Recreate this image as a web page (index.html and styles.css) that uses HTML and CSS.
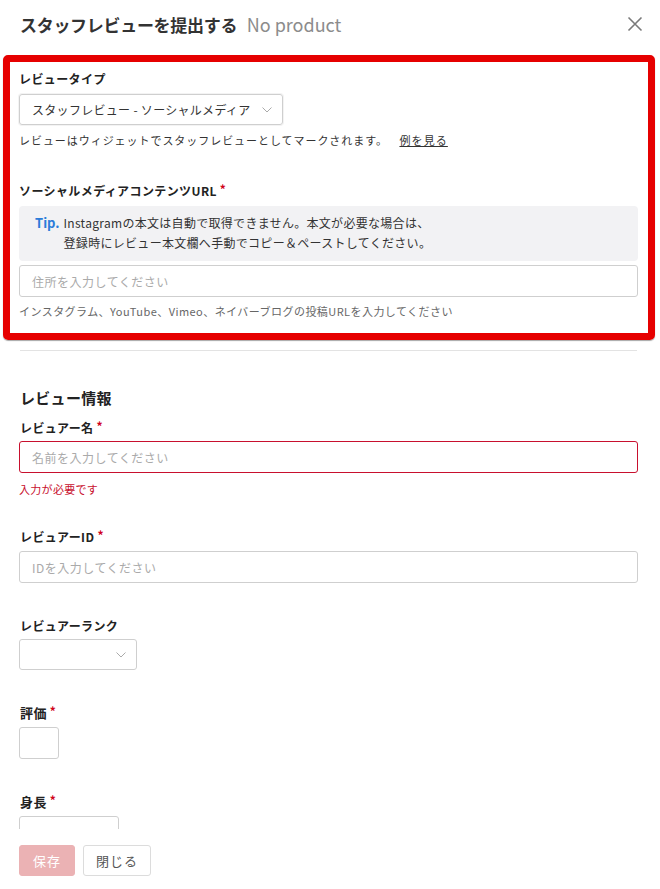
FILE: index.html
```html
<!DOCTYPE html>
<html lang="ja">
<head>
<meta charset="utf-8">
<title>スタッフレビューを提出する</title>
<link rel="stylesheet" href="styles.css">
</head>
<body>
<div class="modal">
  <header class="head">
    <h1 class="title">スタッフレビューを提出する <span class="sub">No product</span></h1>
    <svg class="close" width="16" height="16" viewBox="0 0 16 16"><path d="M1.5 1.5 L14.5 14.5 M14.5 1.5 L1.5 14.5" stroke="#7a7a7a" stroke-width="1.6" fill="none"/></svg>
  </header>

  <section class="highlight">
    <div class="label">レビュータイプ</div>
    <div class="select wide">
      <span>スタッフレビュー - ソーシャルメディア</span>
      <svg class="chev" width="10" height="6" viewBox="0 0 10 6"><path d="M0.5 0.5 L5 5 L9.5 0.5" stroke="#aaa" stroke-width="1" fill="none"/></svg>
    </div>
    <p class="help">レビューはウィジェットでスタッフレビューとしてマークされます。 <a class="link">例を見る</a></p>

    <div class="label label-gap">ソーシャルメディアコンテンツURL<span class="req">*</span></div>
    <div class="tip">
      <span class="tip-key">Tip.</span>
      <div class="tip-text">
        <div>Instagramの本文は自動で取得できません。本文が必要な場合は、</div>
        <div>登録時にレビュー本文欄へ手動でコピー＆ペーストしてください。</div>
      </div>
    </div>
    <div class="input url"><span class="ph">住所を入力してください</span></div>
    <p class="hint">インスタグラム、YouTube、Vimeo、ネイバーブログの投稿URLを入力してください</p>
  </section>

  <hr class="divider">

  <section class="info">
    <h2 class="sect">レビュー情報</h2>
    <div class="label first">レビュアー名<span class="req">*</span></div>
    <div class="input error"><span class="ph">名前を入力してください</span></div>
    <p class="err">入力が必要です</p>

    <div class="label gap-l">レビュアーID<span class="req">*</span></div>
    <div class="input"><span class="ph">IDを入力してください</span></div>

    <div class="label gap-xl">レビュアーランク</div>
    <div class="select small">
      <span></span>
      <svg class="chev" width="10" height="6" viewBox="0 0 10 6"><path d="M0.5 0.5 L5 5 L9.5 0.5" stroke="#aaa" stroke-width="1" fill="none"/></svg>
    </div>

    <div class="label big gap-xl">評価<span class="req">*</span></div>
    <div class="box"></div>

    <div class="label big gap-xl">身長<span class="req">*</span></div>
    <div class="row">
      <div class="input height"></div>
      <span class="unit">cm</span>
    </div>
  </section>
</div>

<footer class="foot">
  <button class="btn save">保存</button>
  <button class="btn closebtn">閉じる</button>
</footer>
</body>
</html>
```

FILE: styles.css
```css
* { box-sizing: border-box; }
html, body { margin: 0; padding: 0; background: #fff; }
body {
  font-family: "Noto Sans CJK JP", "Noto Sans", sans-serif;
  color: #333;
  width: 660px;
  height: 889px;
  overflow: hidden;
}
.modal { padding-bottom: 80px; }

.head {
  height: 55px;
  display: flex;
  align-items: flex-start;
  justify-content: space-between;
  padding: 11px 17px 0 20px;
}
.title {
  margin: 0;
  font-size: 17px;
  line-height: 26px;
  font-weight: 700;
  color: #333;
  letter-spacing: -0.3px;
}
.sub { font-weight: 400; color: #8c8c8c; letter-spacing: 0; margin-left: 6px; font-size: 18px; }
.close { margin-top: 5px; }

.highlight {
  margin: 0 5px 0 3px;
  border: 7px solid #e60000;
  border-radius: 5px;
  padding: 8px 10px 14px 9px;
  box-shadow: 0 1px 1px rgba(0,0,0,0.35);
}

.label {
  font-size: 12px;
  line-height: 18px;
  font-weight: 700;
  color: #222;
  letter-spacing: 0.4px;
}
.label.big { font-size: 13px; }
.req {
  color: #d0021b;
  font-size: 12px;
  margin-left: 3px;
  position: relative;
  top: -2px;
}
.label-gap { margin-top: 34px; }

.select {
  margin-top: 6px;
  height: 31px;
  border: 1px solid #cfcfcf;
  border-radius: 3px;
  display: flex;
  align-items: center;
  justify-content: space-between;
  padding: 0 10px 0 12px;
  font-size: 12px;
  color: #333;
  letter-spacing: 0.3px;
}
.select.wide { width: 264px; box-shadow: 0 0 0 1px #f3f3f3; }
.select.small { width: 118px; }
.chev { flex: none; }

.help {
  margin: 7px 0 0;
  font-size: 11px;
  line-height: 16px;
  letter-spacing: 0.95px;
  color: #333;
}
.link { text-decoration: underline; color: #333; margin-left: 8px; letter-spacing: 1.1px; }

.tip {
  margin-top: 6px;
  background: #f2f2f4;
  border-radius: 4px;
  padding: 7px 12px 8px 16px;
  display: flex;
  gap: 4px;
  font-size: 12px;
  line-height: 20px;
  color: #333;
}
.tip-text { letter-spacing: 0.3px; }
.tip-key { color: #2b7cd9; font-weight: 700; font-size: 13px; }

.input {
  margin-top: 4px;
  height: 32px;
  border: 1px solid #cfcfcf;
  border-radius: 3px;
  display: flex;
  align-items: center;
  padding: 0 12px;
  font-size: 12px;
  letter-spacing: 0.5px;
}
.ph { color: #aaa; }
.input.error { border-color: #c8102e; margin-top: 4px; }
.input.height { width: 100px; margin-top: 6px; height: 32px; }

.hint {
  margin: 6px 0 0;
  font-size: 11px;
  line-height: 16px;
  color: #666;
  letter-spacing: 0.45px;
}

.divider {
  margin: 10px 23px 0 20px;
  border: 0;
  border-top: 1px solid #e3e3e3;
  height: 0;
}

.info { padding: 0 22px 0 19px; }
.info .label { padding-left: 1px; }
.sect {
  margin: 36px 0 0 1px;
  font-size: 15px;
  line-height: 22px;
  font-weight: 700;
  color: #222;
  letter-spacing: 0.3px;
}
.first { margin-top: 10px; }
.err {
  margin: 8px 0 0;
  font-size: 11px;
  line-height: 16px;
  color: #c8102e;
  letter-spacing: 0.3px;
}
.gap-l { margin-top: 31px; }
.gap-xl { margin-top: 34px; }
.info .input:not(.error) { margin-top: 5px; }
.info .select { margin-top: 4px; }

.box {
  margin-top: 5px;
  width: 40px;
  height: 32px;
  border: 1px solid #cfcfcf;
  border-radius: 3px;
}
.row { display: flex; align-items: center; gap: 6px; }
.unit { font-size: 11px; color: #aaa; margin-top: 8px; }

.foot {
  position: fixed;
  left: 0;
  right: 0;
  bottom: 0;
  height: 60px;
  background: #fff;
  display: flex;
  gap: 8px;
  padding: 16px 19px 0;
}
.btn {
  height: 31px;
  border-radius: 3px;
  font-family: "Noto Sans CJK JP", "Noto Sans", sans-serif;
  font-size: 13px;
  letter-spacing: 1px;
  padding: 0;
  cursor: pointer;
}
.save {
  width: 56px;
  background: #ebb2b4;
  border: 1px solid #ebb2b4;
  color: #fff;
}
.closebtn {
  width: 68px;
  background: #fff;
  border: 1px solid #dcdcdc;
  color: #555;
}
```
